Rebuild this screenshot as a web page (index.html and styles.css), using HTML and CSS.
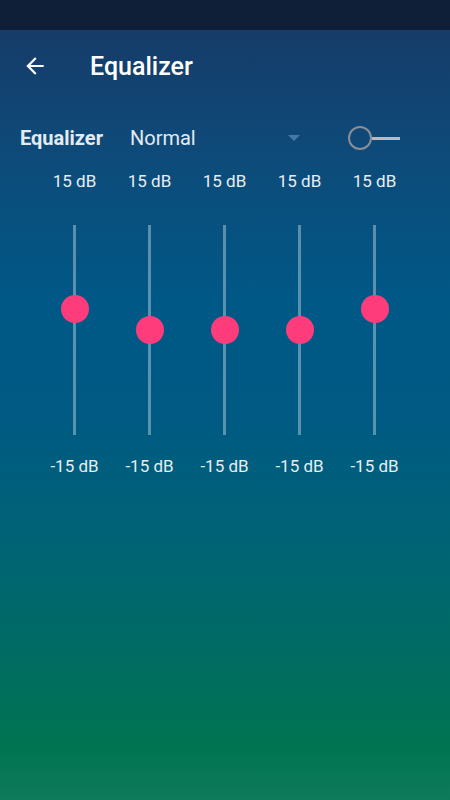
FILE: index.html
```html
<!DOCTYPE html>
<html lang="en">
<head>
  <meta charset="UTF-8">
  <meta name="viewport" content="width=device-width, initial-scale=1.0">
  <title>Equalizer</title>
  <link rel="stylesheet" href="styles.css">
</head>
<body>
  <div class="statusbar"></div>

  <div class="appbar">
    <svg class="back" width="26" height="26" viewBox="0 0 24 24">
      <path d="M20 11H7.83l5.59-5.59L12 4l-8 8 8 8 1.41-1.41L7.83 13H20v-2z" fill="#fff"/>
    </svg>
    <h1>Equalizer</h1>
  </div>

  <div class="controls">
    <span class="label">Equalizer</span>
    <div class="preset">
      <span>Normal</span>
      <span class="caret"></span>
    </div>
    <div class="switch">
      <span class="knob"></span>
      <span class="line"></span>
    </div>
  </div>

  <div class="bands">
    <div class="band">
      <span class="db">15 dB</span>
      <div class="track"><span class="thumb" style="top: 40%"></span></div>
      <span class="db">-15 dB</span>
    </div>
    <div class="band">
      <span class="db">15 dB</span>
      <div class="track"><span class="thumb" style="top: 50%"></span></div>
      <span class="db">-15 dB</span>
    </div>
    <div class="band">
      <span class="db">15 dB</span>
      <div class="track"><span class="thumb" style="top: 50%"></span></div>
      <span class="db">-15 dB</span>
    </div>
    <div class="band">
      <span class="db">15 dB</span>
      <div class="track"><span class="thumb" style="top: 50%"></span></div>
      <span class="db">-15 dB</span>
    </div>
    <div class="band">
      <span class="db">15 dB</span>
      <div class="track"><span class="thumb" style="top: 40%"></span></div>
      <span class="db">-15 dB</span>
    </div>
  </div>
</body>
</html>
```

FILE: styles.css
```css
html, body {
  height: 100%;
}
body {
  margin: 0;
  font-family: Roboto, "Noto Sans", sans-serif;
  color: #fff;
  background: linear-gradient(180deg, #163c69 30px, #0e4a79 150px, #005886 300px, #005a83 420px, #006375 540px, #006c62 660px, #007451 750px, #0f7b5a 800px);
  overflow: hidden;
}
.statusbar {
  height: 30px;
  background-color: #0f1f38;
}
.appbar {
  height: 72px;
  display: flex;
  align-items: center;
  padding-left: 22px;
}
.appbar h1 {
  margin: 0 0 0 42px;
  font-size: 25px;
  font-weight: 500;
}
.controls {
  height: 40px;
  margin-top: 16px;
  display: flex;
  align-items: center;
  padding-left: 20px;
}
.label {
  font-size: 20px;
  font-weight: 700;
  color: #e4ebf1;
  width: 110px;
}
.preset {
  width: 170px;
  display: flex;
  align-items: center;
  justify-content: space-between;
  font-size: 20px;
  color: #e4ebf1;
}
.caret {
  width: 0;
  height: 0;
  border-left: 6px solid transparent;
  border-right: 6px solid transparent;
  border-top: 6px solid rgba(120, 170, 210, 0.5);
}
.switch {
  margin-left: 48px;
  display: flex;
  align-items: center;
}
.knob {
  width: 20px;
  height: 20px;
  border: 2px solid #8a8f96;
  border-radius: 50%;
}
.line {
  width: 28px;
  height: 3px;
  background-color: #b8bcc2;
}
.bands {
  display: flex;
  padding-left: 37px;
  margin-top: 12px;
}
.band {
  width: 75px;
  display: flex;
  flex-direction: column;
  align-items: center;
}
.db {
  font-size: 17px;
  line-height: 22px;
  color: #e8eef3;
}
.track {
  position: relative;
  width: 3px;
  height: 210px;
  margin: 33px 0 20px;
  background-color: rgba(255, 255, 255, 0.35);
}
.thumb {
  position: absolute;
  left: 50%;
  width: 28px;
  height: 28px;
  margin: -14px 0 0 -14px;
  border-radius: 50%;
  background-color: #fe3c7c;
}
```
